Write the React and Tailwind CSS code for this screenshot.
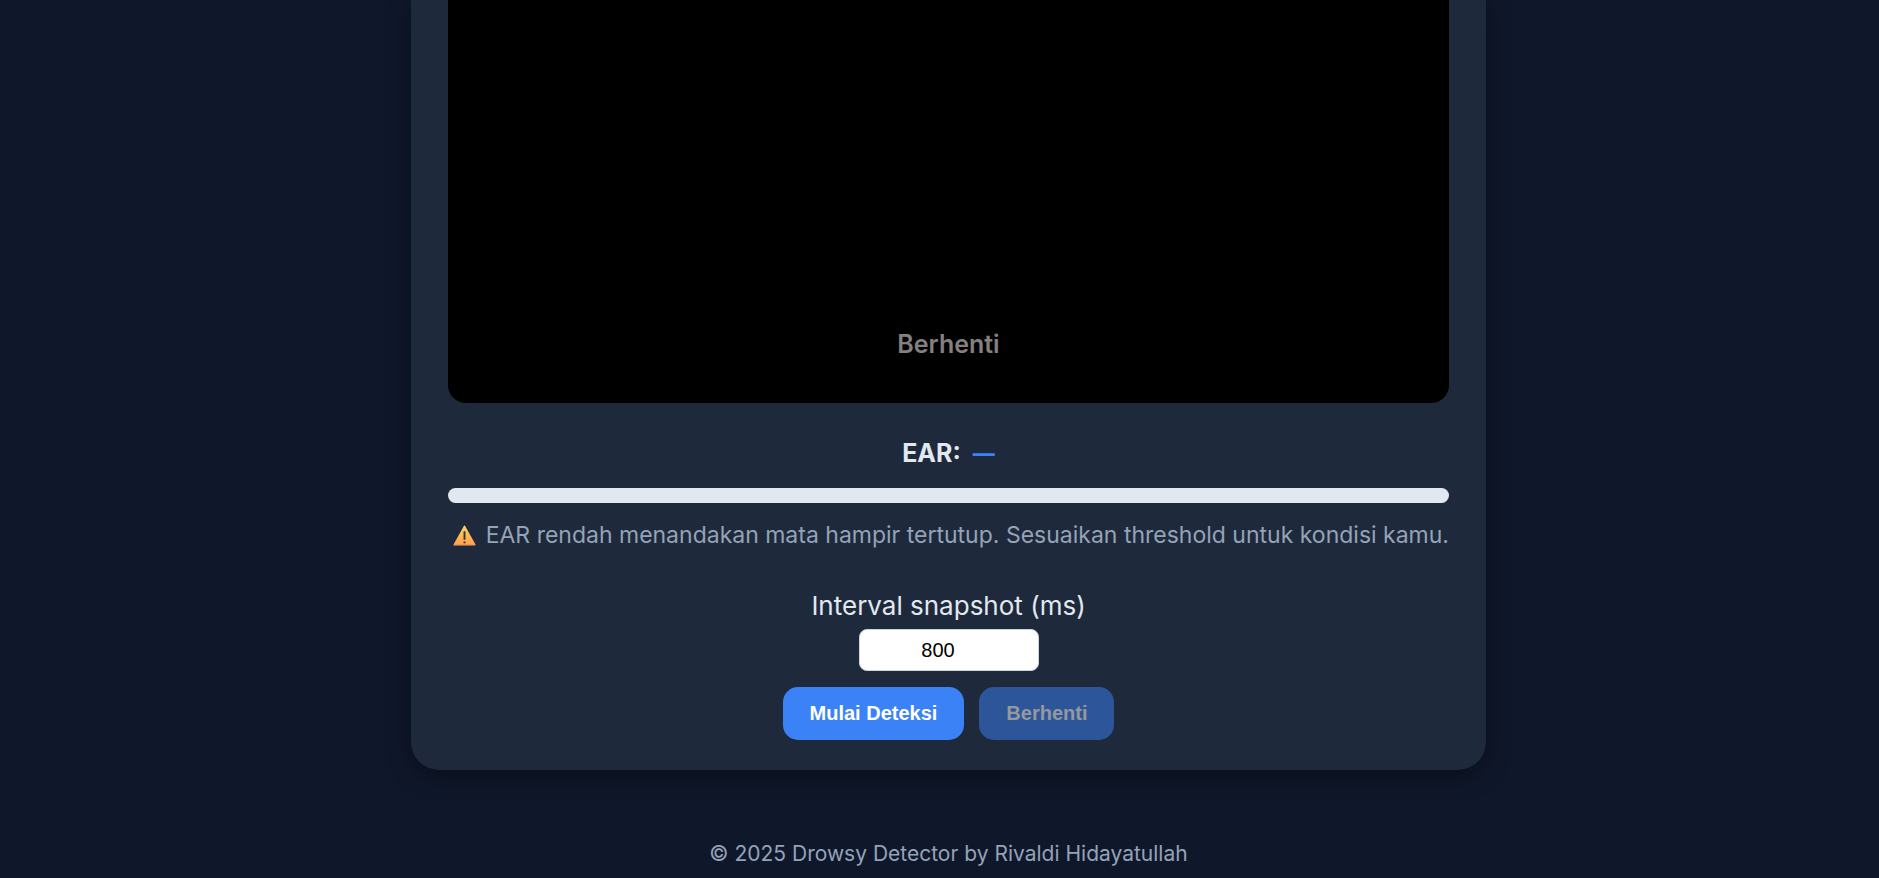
function WarningIcon() {
  return (
    <svg viewBox="0 0 24 22" className="h-[21px] w-[23px] shrink-0" aria-hidden="true">
      <defs>
        <linearGradient id="warn" x1="0" y1="0" x2="0" y2="1">
          <stop offset="0" stopColor="#ffd65c" />
          <stop offset="1" stopColor="#ffa050" />
        </linearGradient>
      </defs>
      <path d="M12 1.2 L23 20.8 H1 Z" fill="url(#warn)" stroke="url(#warn)" strokeWidth="1.2" strokeLinejoin="round" />
      <path d="M11 6.5 h2 v9 h-2 Z M11 17.2 h2 v2 h-2 Z" fill="#3a2f35" />
    </svg>
  );
}

export default function App() {
  return (
    <div className="min-h-screen bg-[#0f172a] pl-[18px] font-['Inter',sans-serif] text-[#e2e8f0]">
      <main className="mx-auto w-full max-w-[1075px] rounded-b-[28px] bg-[#1e293b] px-[37px] pb-[30px] shadow-[0_5px_25px_rgba(0,0,0,0.4)]">
        <section className="flex h-[403px] items-end justify-center rounded-b-[18px] bg-black pb-[41px]">
          <p className="text-[25px] leading-[36px] font-semibold text-[#858080]">Berhenti</p>
        </section>

        <p className="mt-[30px] flex items-center justify-center gap-[12px] text-[25px] leading-[40px] font-bold">
          EAR: <span className="text-[22px] font-extrabold text-[#3b82f6]">—</span>
        </p>
        <div className="mt-[15px] h-[15px] rounded-full bg-[#e2e8f0]" role="meter" aria-label="EAR" />
        <p className="mt-[15px] flex items-center justify-end gap-[10px] text-[23px] leading-[34px] whitespace-nowrap text-[#94a3b8]">
          <WarningIcon />
          EAR rendah menandakan mata hampir tertutup. Sesuaikan threshold untuk kondisi kamu.
        </p>

        <form className="mt-[34px] flex flex-col items-center">
          <label htmlFor="interval" className="text-[26px] leading-[40px]">
            Interval snapshot (ms)
          </label>
          <input
            id="interval"
            type="number"
            defaultValue="800"
            className="mt-[3px] h-[42px] w-[180px] rounded-[8px] border border-[#cbd5e1] bg-white pr-[6px] text-center font-['Liberation_Sans',sans-serif] text-[20px] text-black"
          />
          <div className="mt-[16px] flex gap-[15px] font-['Liberation_Sans',sans-serif] text-[20px] leading-[23px] font-bold">
            <button type="button" className="rounded-[15px] bg-[#3b82f6] px-[27px] py-[15px] text-white">
              Mulai Deteksi
            </button>
            <button type="button" disabled className="rounded-[15px] bg-[#2c5699] px-[27px] py-[15px] text-[#95989e]">
              Berhenti
            </button>
          </div>
        </form>
      </main>
      <footer className="pt-[68px] text-center text-[21px] leading-[32px] text-[#94a3b8]">
        © 2025 Drowsy Detector by Rivaldi Hidayatullah
      </footer>
    </div>
  );
}
